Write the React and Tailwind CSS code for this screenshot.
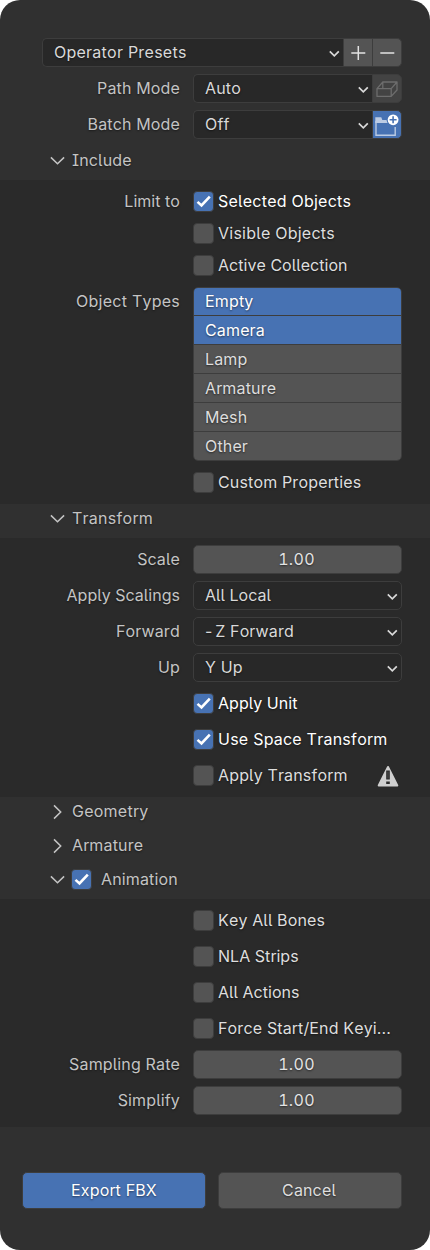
import React from "react";

const CheckMark = () => (
  <svg width="21" height="21" viewBox="0 0 21 21" fill="none" className="block">
    <path d="M4.5 10.9 8.5 14.5 16.8 5.6" stroke="#fff" strokeWidth="2.6" />
  </svg>
);

const Box = ({ on }) => (
  <span
    className={`block h-[21px] w-[21px] shrink-0 rounded-[4px] border ${
      on ? "border-[#3d3d3d] bg-[#4772b3]" : "border-[#3d3d3d] bg-[#545454]"
    }`}
  >
    {on && (
      <span className="-m-px block">
        <CheckMark />
      </span>
    )}
  </span>
);

const Chevron = ({ className = "" }) => (
  <svg width="12" height="8" viewBox="0 0 12 8" fill="none" className={`shrink-0 ${className}`}>
    <path d="M1.8 1.4 6.3 5.8 10.8 1.4" stroke="#d9d9d9" strokeWidth="1.7" />
  </svg>
);

const Arrow = ({ open }) => (
  <svg width="16" height="16" viewBox="0 0 16 16" fill="none" className="shrink-0">
    <path
      d={open ? "M1.9 4.4 8.5 10.8 15.1 4.4" : "M5 1.4 11.7 8 5 14.6"}
      stroke="#c4c4c4"
      strokeWidth="1.5"
    />
  </svg>
);

const Tight = ({ children }) => <span className="tracking-[0.04px]">{children}</span>;
const Loose = ({ children }) => <span className="tracking-[0.24px]">{children}</span>;

const Row = ({ label, children }) => (
  <div className="flex h-[29px]">
    <div className="w-[180px] text-right leading-[29px] text-[#c4c4c4]">{label}</div>
    <div className="ml-[13px] flex w-[209px]">{children}</div>
  </div>
);

const Check = ({ label, on, text, children }) => (
  <Row label={label}>
    <div className="flex flex-1 items-center">
      <Box on={on} />
      <span className={`ml-1 leading-[29px] ${on ? "text-white" : "text-[#dedede]"}`}>{text}</span>
      {children}
    </div>
  </Row>
);

const Select = ({ text, children }) => (
  <>
    <div
      className={`flex flex-1 items-center justify-between border border-[#3d3d3d] bg-[#282828] pl-[11px] text-[#d9d9d9] ${
        children ? "rounded-l-[5px] border-r-0 pr-[3px]" : "rounded-[5px] pr-[3px]"
      }`}
    >
      <span className="leading-[27px]">{text}</span>
      <Chevron className="mt-[3px]" />
    </div>
    {children}
  </>
);

const NumberField = ({ value }) => (
  <div className="flex-1 rounded-[5px] border border-[#3d3d3d] bg-[#545454] pr-[2px] text-center leading-[27px] tracking-[0.3px] tabular-nums text-[#e3e3e3]">
    {value}
  </div>
);

const Section = ({ title, open, checked }) => (
  <div className="flex h-[34px] items-center bg-[#303030] pb-[5px] pl-[49px] text-[#c4c4c4]">
    <Arrow open={open} />
    {checked && (
      <span className="ml-[6px]">
        <Box on />
      </span>
    )}
    <span className={`leading-[29px] ${checked ? "ml-[9px]" : "ml-[7px]"}`}>{title}</span>
  </div>
);

const types = ["Empty", "Camera", "Lamp", "Armature", "Mesh", "Other"];

export default function App() {
  return (
    <div className="h-[1250px] w-[430px] bg-white">
      <div className="flex h-[1250px] w-[430px] flex-col overflow-hidden rounded-[20px] bg-[#303030] font-['Inter',sans-serif] text-[16px] tracking-[0.15px] [font-feature-settings:'cv05','cv08'] [font-kerning:none] [text-shadow:0_1px_2px_rgba(0,0,0,0.5)]">
        <div className="flex h-[146px] flex-col gap-[7px] pt-[38px]">
          <div className="ml-[42px] flex h-[29px] w-[360px]">
            <Select text={<Loose>Operator Presets</Loose>}>
              <div className="flex w-[30px] items-center justify-center border border-[#3d3d3d] bg-[#545454]">
                <svg width="16" height="16" viewBox="0 0 16 16" className="shrink-0">
                  <path d="M1.3 8H15.3M8.3 1V15" stroke="#e3e3e3" strokeWidth="1.5" />
                </svg>
              </div>
              <div className="flex w-[29px] items-center justify-center rounded-r-[5px] border border-l-0 border-[#3d3d3d] bg-[#545454]">
                <svg width="16" height="16" viewBox="0 0 16 16" className="shrink-0">
                  <path d="M1.3 8H15.3" stroke="#e3e3e3" strokeWidth="1.5" />
                </svg>
              </div>
            </Select>
          </div>
          <Row label="Path Mode">
            <Select text="Auto">
              <div className="flex w-[30px] items-center justify-center rounded-r-[5px] border border-[#3d3d3d] bg-[#434343]">
                <svg width="24" height="18" viewBox="0 0 24 18" fill="none" className="shrink-0">
                  <path
                    d="M2 8.6 7.8 2H22V10L16.2 16.4H2ZM2 8.6H16.2V16.4M16.2 8.6 22 2M7.8 2V8.6"
                    stroke="#6d6d6d"
                    strokeWidth="1.3"
                    strokeLinejoin="round"
                  />
                </svg>
              </div>
            </Select>
          </Row>
          <Row label="Batch Mode">
            <Select text="Off">
              <div className="flex w-[30px] items-center justify-center rounded-r-[5px] border border-[#3d3d3d] bg-[#4772b3]">
                <svg width="28" height="27" viewBox="0 0 28 27" fill="none" className="shrink-0">
                  <path d="M2.3 6.3H8.3L9.3 9H13.5L14.5 12H2.3Z" fill="#bccbe3" />
                  <path d="M3 10V24.3H22.2V16" stroke="#bccbe3" strokeWidth="1.4" />
                  <circle cx="20.1" cy="8.8" r="5.4" fill="#fff" />
                  <path d="M16.6 8.8H23.6M20.1 5.3V12.3" stroke="#4772b3" strokeWidth="1.6" />
                </svg>
              </div>
            </Select>
          </Row>
        </div>
        <Section title="Include" open />
        <div className="flex h-[324px] flex-col bg-[#2a2a2a] pt-[7px]">
          <div className="flex flex-col gap-[3px]">
            <Check label={<Tight>Limit to</Tight>} on text={<Loose>Selected Objects</Loose>} />
            <Check text={<Loose>Visible Objects</Loose>} />
            <Check text={<Tight>Active Collection</Tight>} />
          </div>
          <div className="mt-[7px] flex">
            <div className="w-[180px] text-right leading-[29px] text-[#c4c4c4]">
              <Loose>Object Types</Loose>
            </div>
            <div className="ml-[13px] w-[209px] overflow-hidden rounded-[5px] border border-[#3d3d3d]">
              {types.map((t, i) => (
                <div
                  key={t}
                  className={`pl-[11px] ${
                    i === 0 ? "h-[27px] leading-[27px]" : "h-[29px] border-t border-[#3d3d3d] leading-[28px]"
                  } ${i < 2 ? "bg-[#4772b3] text-white" : "bg-[#545454] text-[#dedede]"}`}
                >
                  {t}
                </div>
              ))}
            </div>
          </div>
          <div className="mt-[7px]">
            <Check text="Custom Properties" />
          </div>
        </div>
        <Section title={<Loose>Transform</Loose>} open />
        <div className="flex h-[259px] flex-col gap-[7px] bg-[#2a2a2a] pt-[7px]">
          <Row label="Scale">
            <NumberField value="1.00" />
          </Row>
          <Row label={<Tight>Apply Scalings</Tight>}>
            <Select text={<Tight>All Local</Tight>} />
          </Row>
          <Row label="Forward">
            <Select
              text={
                <>
                  <span className="[word-spacing:-2px]">- </span>Z Forward
                </>
              }
            />
          </Row>
          <Row label="Up">
            <Select text="Y Up" />
          </Row>
          <Check on text={<Tight>Apply Unit</Tight>} />
          <Check on text={<Loose>Use Space Transform</Loose>} />
          <Check text="Apply Transform">
            <svg width="22" height="22" viewBox="0 0 22 22" className="mr-[3px] ml-auto">
              <path
                d="M11 2 20.3 20.5H1.7Z"
                fill="#cfcfcf"
                stroke="#cfcfcf"
                strokeWidth="2"
                strokeLinejoin="round"
              />
              <path d="M11 5.5V14.5M11 16.5V19" stroke="#2a2a2a" strokeWidth="3.6" />
              <path d="M11 6.5V13.5" stroke="#505050" strokeWidth="1" />
            </svg>
          </Check>
        </div>
        <Section title={<Loose>Geometry</Loose>} />
        <Section title="Armature" />
        <Section title="Animation" open checked />
        <div className="flex h-[228px] flex-col gap-[7px] bg-[#2a2a2a] pt-[7px]">
          <Check text="Key All Bones" />
          <Check text={<Tight>NLA Strips</Tight>} />
          <Check text={<Tight>All Actions</Tight>} />
          <Check text="Force Start/End Keyi..." />
          <Row label="Sampling Rate">
            <NumberField value="1.00" />
          </Row>
          <Row label="Simplify">
            <NumberField value="1.00" />
          </Row>
        </div>
        <div className="flex gap-3 pt-[45px] pl-[22px] text-center leading-[35px]">
          <button className="h-[37px] w-[184px] rounded-[5px] border border-[#3d3d3d] bg-[#4772b3] tracking-[0.15px] text-white [text-shadow:inherit]">
            Export FBX
          </button>
          <button className="h-[37px] w-[184px] rounded-[5px] border border-[#3d3d3d] bg-[#545454] pr-[2px] tracking-[0.15px] text-[#dedede] [text-shadow:inherit]">
            Cancel
          </button>
        </div>
      </div>
    </div>
  );
}
